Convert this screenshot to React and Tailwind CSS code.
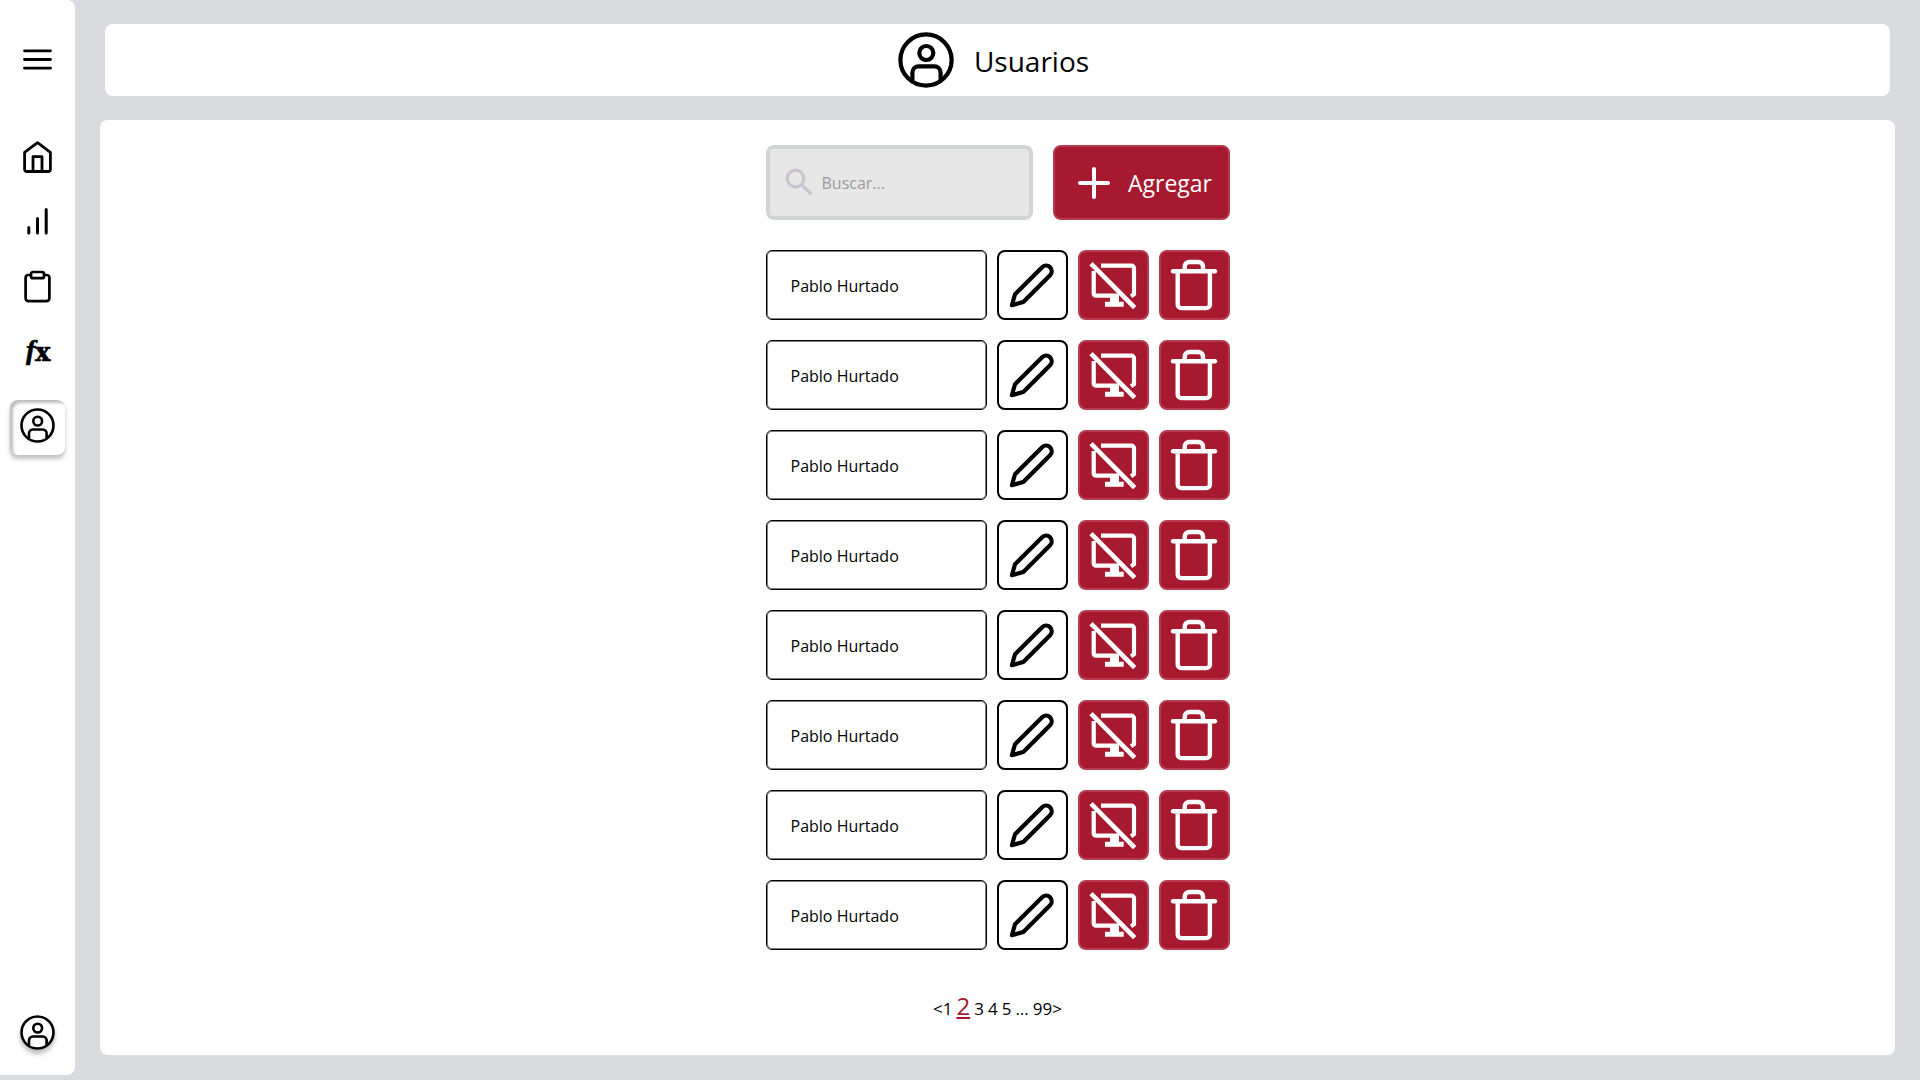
const users = Array.from({ length: 8 }, (_, i) => ({ id: i + 1, name: 'Pablo Hurtado' }));

function UserCircleIcon({ className }) {
  return (
    <svg className={className} viewBox="0 0 56 56" fill="none" stroke="currentColor" strokeWidth={4.2}>
      <circle cx="28" cy="28" r="25.6" />
      <circle cx="28.3" cy="21" r="7" />
      <path d="M14.4 48V40.5a6.2 6.2 0 0 1 6.2-6.2h15.8a6.2 6.2 0 0 1 6.2 6.2V48" />
    </svg>
  );
}

function MenuIcon() {
  return (
    <svg className="w-[33px] h-[33px]" viewBox="0 0 33 33" fill="none" stroke="currentColor" strokeWidth={2.8} strokeLinecap="round">
      <path d="M3.5 7.8h26M3.5 16.5h26M3.5 25.2h26" />
    </svg>
  );
}

function HomeIcon() {
  return (
    <svg className="w-[33px] h-[33px]" viewBox="0 0 33 33" fill="none" stroke="currentColor" strokeWidth={2.8} strokeLinejoin="round">
      <path d="M3.6 12.3 16.5 2.6l12.9 9.7v17a2.4 2.4 0 0 1-2.4 2.2H6a2.4 2.4 0 0 1-2.4-2.2z" />
      <path d="M12 31V16.7h9V31" />
    </svg>
  );
}

function BarsIcon() {
  return (
    <svg className="w-[33px] h-[33px]" viewBox="0 0 33 33" fill="none" stroke="currentColor" strokeWidth={3} strokeLinecap="round">
      <path d="M7.8 22.5v5.6M16.5 13.5v14.6M25.2 4.5v23.6" />
    </svg>
  );
}

function ClipboardIcon() {
  return (
    <svg className="w-[33px] h-[33px]" viewBox="0 0 33 33" fill="none" stroke="currentColor" strokeWidth={2.7} strokeLinejoin="round">
      <path d="M10 5H7.4a2.8 2.8 0 0 0-2.8 2.8v20.5a2.8 2.8 0 0 0 2.8 2.8h18.2a2.8 2.8 0 0 0 2.8-2.8V7.8A2.8 2.8 0 0 0 25.6 5H23" />
      <rect x="10" y="2" width="13" height="6.2" rx="2" />
    </svg>
  );
}

function FunctionIcon() {
  return (
    <svg className="w-[33px] h-[33px] overflow-visible" viewBox="0 0 33 33" fill="currentColor" stroke="currentColor" strokeWidth={0.6}>
      <text x="5" y="23.5" fontSize="28" className="font-['Liberation_Serif',serif] font-bold italic">f</text>
      <text x="14" y="25.6" fontSize="26" className="font-['DejaVu_Serif',serif] font-bold">x</text>
    </svg>
  );
}

function PencilIcon() {
  return (
    <svg className="w-12 h-12" viewBox="0 0 48 48" fill="none" stroke="currentColor" strokeWidth={4.2} strokeLinejoin="round">
      <path d="M3.9 44.2 7 33.3 34.4 6a5.6 5.6 0 0 1 7.9 7.9L15.3 41z" />
    </svg>
  );
}

function ScreenOffIcon() {
  return (
    <svg className="w-12 h-12" viewBox="0 0 48 48" fill="none" stroke="currentColor" strokeWidth={4.2}>
      <path d="M2 2.7 45.7 46.7" strokeWidth={4.6} />
      <path d="M12 4.7h30.5a2.5 2.5 0 0 1 2.5 2.500v26l-3 2" />
      <path d="M4.700 10v22.500a2.200 2.200 0 0 0 2.200 2.200h23" />
      <path d="M21 35h9v5.700h4.700v5H16v-5h5z" fill="currentColor" stroke="none" />
    </svg>
  );
}

function TrashIcon() {
  return (
    <svg className="w-12 h-[52px]" viewBox="0 0 48 52" fill="none" stroke="currentColor" strokeWidth={4.4} strokeLinecap="round" strokeLinejoin="round">
      <path d="M3 12.3h42" />
      <path d="M14.7 12V7.5A4.5 4.5 0 0 1 19.2 3h9.3A4.5 4.5 0 0 1 33 7.5V12" />
      <path d="M7.7 12.3V45.5a3.6 3.6 0 0 0 3.600 3.600h25a3.600 3.600 0 0 0 3.600-3.600V12.300" />
    </svg>
  );
}

function Sidebar() {
  return (
    <aside className="w-[75px] shrink-0 mb-[5px] pt-[43px] pb-[25px] bg-white rounded-r-lg flex flex-col items-center">
      <button aria-label="Menú">
        <MenuIcon />
      </button>
      <nav className="mt-16 flex flex-col items-center gap-8">
        <a href="#inicio" aria-label="Inicio"><HomeIcon /></a>
        <a href="#reportes" aria-label="Reportes"><BarsIcon /></a>
        <a href="#tareas" aria-label="Tareas"><ClipboardIcon /></a>
        <a href="#formulas" aria-label="Fórmulas"><FunctionIcon /></a>
        <a
          href="#usuarios"
          aria-label="Usuarios"
          className="w-[55px] h-[55px] pt-2 flex justify-center rounded-lg shadow-[inset_3px_3px_3px_rgba(0,0,0,0.25),0_4px_4px_rgba(0,0,0,0.25)]"
        >
          <UserCircleIcon className="w-[35px] h-[35px]" />
        </a>
      </nav>
      <a href="#perfil" aria-label="Perfil" className="mt-auto rounded-full shadow-[0_4px_4px_rgba(0,0,0,0.25)]">
        <UserCircleIcon className="w-[35px] h-[35px]" />
      </a>
    </aside>
  );
}

function UserRow({ name }) {
  return (
    <li className="flex gap-[10px] h-[70px]">
      <div className="flex-1 px-6 pt-0.5 flex items-center border border-black rounded-md shadow-[inset_0_0_0_1px_rgba(0,0,0,0.5)] text-base">
        {name}
      </div>
      <button aria-label="Editar" className="w-[71px] flex items-center justify-center border-2 border-black rounded-lg">
        <PencilIcon />
      </button>
      <button aria-label="Desactivar" className="w-[71px] flex items-center justify-center bg-[#a6192e] border-2 border-[#b63a50] rounded-lg text-white">
        <ScreenOffIcon />
      </button>
      <button aria-label="Eliminar" className="w-[71px] flex items-center justify-center bg-[#a6192e] border-2 border-[#b63a50] rounded-lg text-white">
        <TrashIcon />
      </button>
    </li>
  );
}

export default function App() {
  return (
    <div className="min-h-screen flex bg-[#dadbdf] text-black font-['Open_Sans',sans-serif]">
      <Sidebar />
      <main className="flex-1 flex flex-col gap-6 pt-6 px-[25px] pb-[25px]">
        <header className="h-[72px] mx-[5px] pr-2 bg-white rounded-lg flex items-center justify-center gap-5">
          <UserCircleIcon className="w-14 h-14" />
          <h1 className="pt-0.5 text-[28px]">Usuarios</h1>
        </header>

        <section className="flex-1 bg-white rounded-lg pt-[25px] flex flex-col items-center">
          <div className="w-[464px]">
            <div className="flex gap-5 h-[75px]">
              <label className="flex-1 min-w-0 pl-[14px] flex items-center gap-[6px] bg-[#e7e7e7] border-4 border-[#d3d4d6] rounded-lg">
                <svg className="w-8 h-8 shrink-0 text-[#cac4d0]" viewBox="0 0 32 32" fill="none" stroke="currentColor" strokeWidth={3.2}>
                  <circle cx="11.5" cy="11.5" r="8.3" />
                  <path d="m17.5 17.5 10 10" />
                </svg>
                <input
                  type="text"
                  aria-label="Buscar"
                  placeholder="Buscar..."
                  className="w-full min-w-0 bg-transparent outline-none text-base placeholder:text-[#9b9b9b]"
                />
              </label>
              <button className="w-[177px] pl-2 flex items-center justify-center gap-[18px] bg-[#a6192e] border-2 border-[#b63a50] rounded-lg text-white text-[23px]">
                <svg className="w-8 h-8" viewBox="0 0 32 32" fill="none" stroke="currentColor" strokeWidth={4} strokeLinecap="round">
                  <path d="M16 2v28M2 16h28" />
                </svg>
                <span className="pt-0.5">Agregar</span>
              </button>
            </div>

            <ul className="mt-[30px] flex flex-col gap-5">
              {users.map((user) => (
                <UserRow key={user.id} name={user.name} />
              ))}
            </ul>
          </div>

          <nav aria-label="Paginación" className="mt-10 flex items-baseline justify-center text-[17px]">
            <button aria-label="Anterior">&lt;</button>
            <button>1</button>
            <button className="mx-1 text-2xl text-[#a6192e] underline">2</button>
            <button>3</button>
            <button className="ml-1">4</button>
            <button className="ml-1">5</button>
            <span className="mx-1">...</span>
            <button>99</button>
            <button aria-label="Siguiente">&gt;</button>
          </nav>
        </section>
      </main>
    </div>
  );
}
